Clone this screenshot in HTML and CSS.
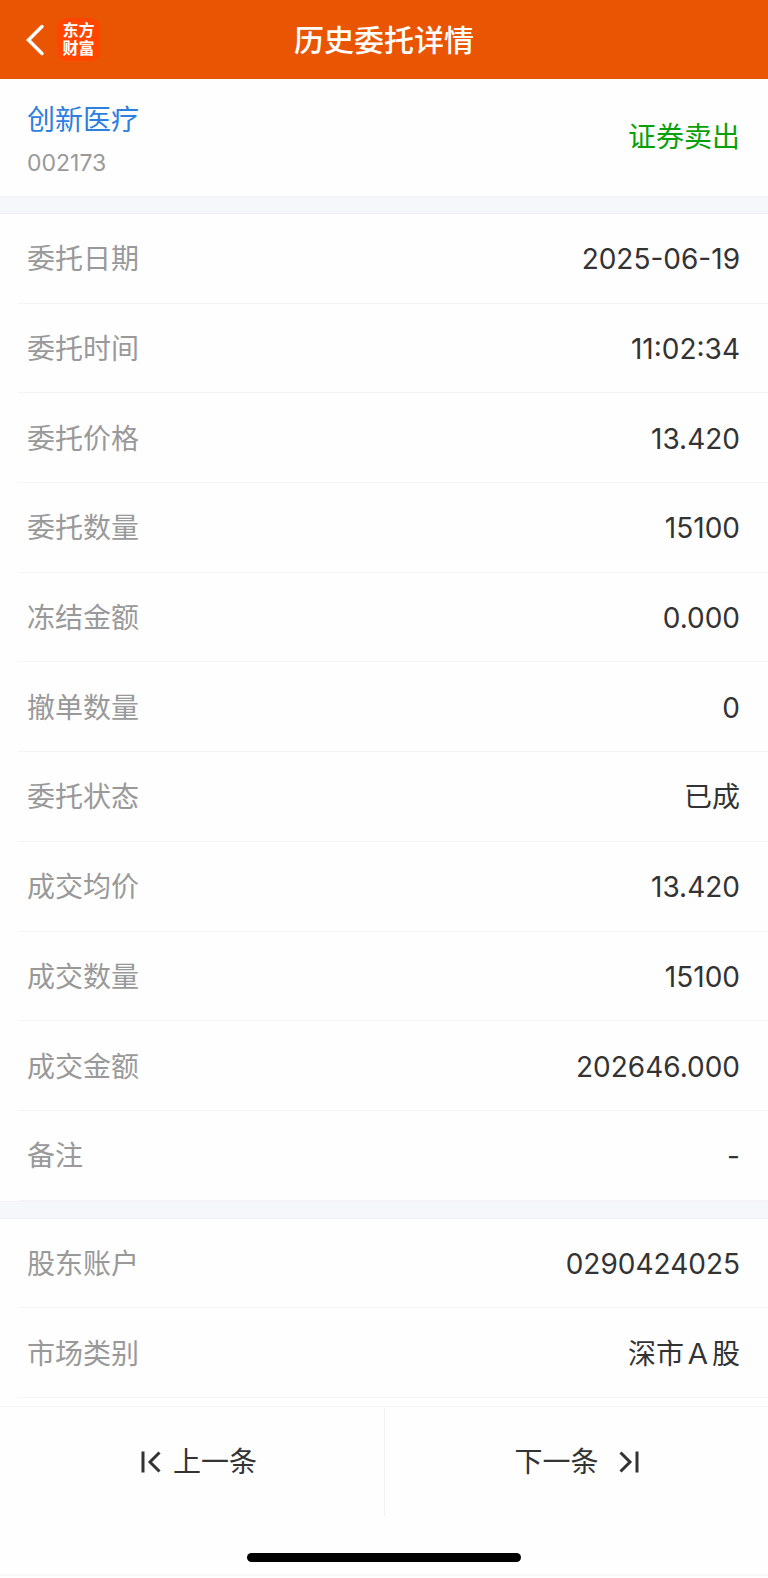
FILE: index.html
```html
<!DOCTYPE html>
<html lang="zh-CN">
<head>
  <meta charset="UTF-8">
  <meta name="viewport" content="width=device-width, initial-scale=1">
  <title>历史委托详情</title>
  <link rel="stylesheet" href="styles.css">
</head>
<body>

  <header class="top-bar">
    <div class="top-left">
      <button class="back-btn" aria-label="返回">
        <svg width="20" height="32" viewBox="0 0 20 32" fill="none" stroke="#fff" stroke-width="3.500" stroke-linecap="round" stroke-linejoin="miter">
          <path d="M17 2.500L3.500 16L17 29.500"/>
        </svg>
      </button>
      <div class="logo">东方<br>财富</div>
    </div>
    <h1>历史委托详情</h1>
  </header>

  <main class="content">
    <div class="summary">
      <div>
        <a class="stock-name" href="#">创新医疗</a>
        <div class="stock-code">002173</div>
      </div>
      <div class="direction">证券卖出</div>
    </div>

    <div class="band"></div>

    <dl class="details">
      <div class="row"><dt>委托日期</dt><dd>2025-06-19</dd></div>
      <div class="row"><dt>委托时间</dt><dd>11:02:34</dd></div>
      <div class="row"><dt>委托价格</dt><dd>13.420</dd></div>
      <div class="row"><dt>委托数量</dt><dd>15100</dd></div>
      <div class="row"><dt>冻结金额</dt><dd>0.000</dd></div>
      <div class="row"><dt>撤单数量</dt><dd>0</dd></div>
      <div class="row"><dt>委托状态</dt><dd>已成</dd></div>
      <div class="row"><dt>成交均价</dt><dd>13.420</dd></div>
      <div class="row"><dt>成交数量</dt><dd>15100</dd></div>
      <div class="row"><dt>成交金额</dt><dd>202646.000</dd></div>
      <div class="row"><dt>备注</dt><dd>-</dd></div>
    </dl>

    <div class="band"></div>

    <dl class="details">
      <div class="row"><dt>股东账户</dt><dd>0290424025</dd></div>
      <div class="row"><dt>市场类别</dt><dd>深市Ａ股</dd></div>
    </dl>
  </main>

  <footer class="bottom-bar">
    <nav class="pager">
      <button class="pager-btn prev">
        <svg width="20" height="22" viewBox="0 0 20 22" fill="none" stroke="#333" stroke-width="3">
          <path d="M2 0.500V21.500M18.500 1.500L9 11L18.500 20.500"/>
        </svg>
        上一条
      </button>
      <button class="pager-btn next">
        下一条
        <svg width="20" height="22" viewBox="0 0 20 22" fill="none" stroke="#333" stroke-width="3">
          <path d="M18 0.500V21.500M1.500 1.500L11 11L1.500 20.500"/>
        </svg>
      </button>
    </nav>
    <div class="home-indicator"></div>
  </footer>

</body>
</html>
```

FILE: styles.css
```css
* {
  box-sizing: border-box;
}

body {
  margin: 0;
  min-height: 100vh;
  display: flex;
  flex-direction: column;
  background-color: #fefefe;
  color: #333;
  font-family: Inter, "Noto Sans CJK SC", sans-serif;
  font-size: 28px;
  line-height: 40px;
}

button {
  border: none;
  background: none;
  padding: 0;
  color: inherit;
  font: inherit;
  cursor: pointer;
}

.top-bar {
  display: grid;
  grid-template-columns: 1fr auto 1fr;
  align-items: center;
  height: 79px;
  padding: 0 25px;
  background-color: #ea5504;
  color: white;
}

.top-bar h1 {
  margin: 0;
  font-size: 30px;
  font-weight: 500;
}

.top-left {
  display: flex;
  align-items: center;
  gap: 12px;
}

.back-btn,
.back-btn svg {
  display: block;
}

.logo {
  width: 43px;
  height: 43px;
  padding: 3px 0;
  border-radius: 10px;
  background-color: #ff4500;
  font-size: 16px;
  font-weight: 700;
  line-height: 18px;
  text-align: center;
}

.content {
  flex: 1;
  display: flex;
  flex-direction: column;
  padding-bottom: 8px;
}

.summary {
  display: flex;
  justify-content: space-between;
  align-items: center;
  padding: 18px 28px 19px 27px;
}

.stock-name {
  display: block;
  color: #2d7fe0;
  line-height: 46px;
  text-decoration: none;
}

.stock-code {
  margin-top: 6px;
  color: #999;
  font-size: 23px;
  line-height: 28px;
}

.direction {
  color: #09a009;
}

.band {
  height: 18px;
  border-top: 1px solid #f2f2f3;
  border-bottom: 1px solid #eeeff0;
  background-color: #f6f7fa;
}

/* rows of both lists share the free height of the page */
.details {
  display: contents;
}

.row {
  flex: 1 0 auto;
  display: flex;
  justify-content: space-between;
  align-items: center;
  margin-left: 18px;
  padding: 25px 28px 23px 9px;
  border-bottom: 1px solid #f4f4f4;
}

.row dt {
  color: #999;
}

.row dd {
  margin: 0;
}

.bottom-bar {
  padding-bottom: 2px;
  border-top: 1px solid #f4f4f4;
}

.pager {
  display: flex;
  padding-top: 1px;
}

.pager-btn {
  width: 50%;
  display: flex;
  justify-content: center;
  align-items: center;
  height: 108px;
}

.prev {
  gap: 12px;
  padding-left: 14px;
}

.next {
  gap: 20px;
  border-left: 1px solid #f2f2f2;
}

.home-indicator {
  width: 274px;
  height: 9px;
  margin: 37px auto 12px;
  border-radius: 5px;
  background-color: black;
}

.bottom-bar::after {
  content: "";
  display: block;
  border-bottom: 2px solid #f7f7f7;
}
```
